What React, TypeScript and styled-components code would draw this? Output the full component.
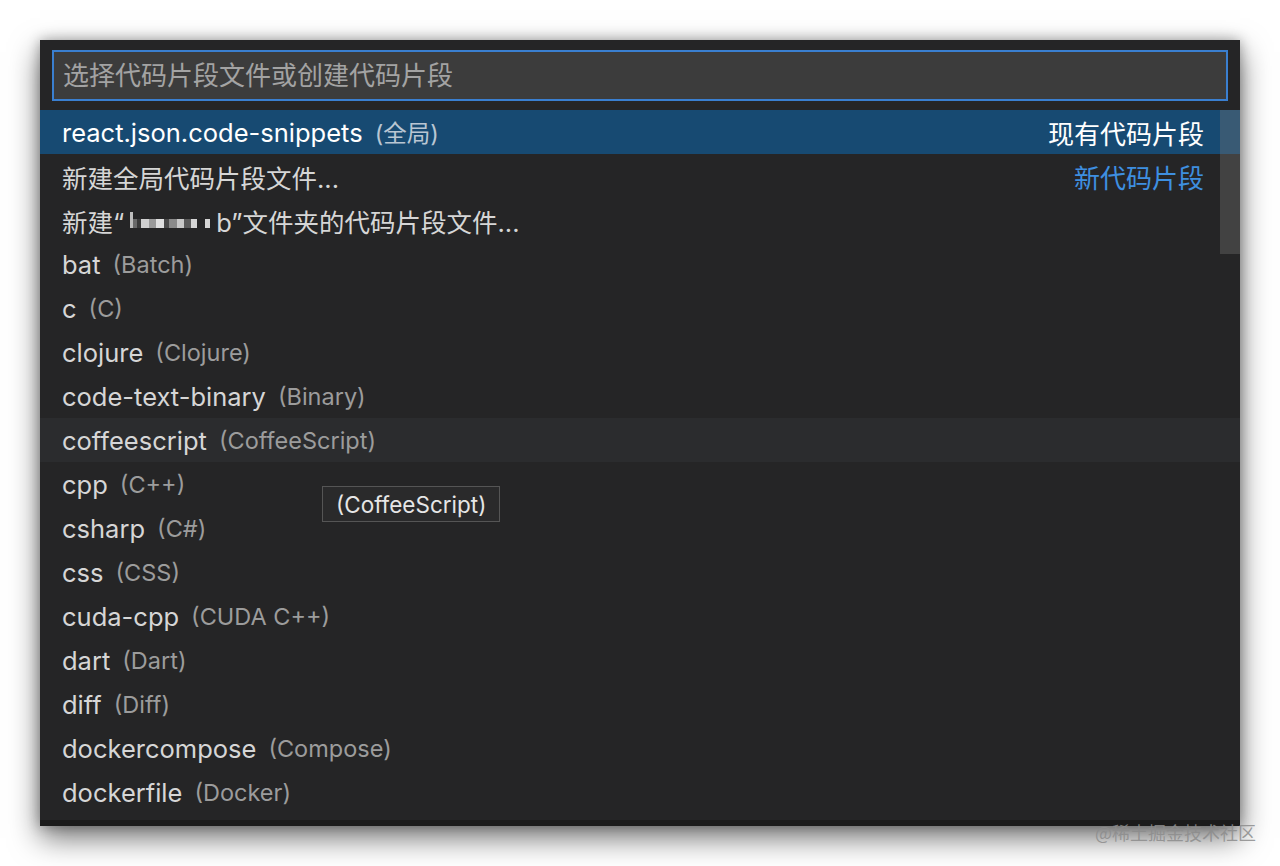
import React from 'react';
import styled, { createGlobalStyle } from 'styled-components';

const GlobalStyle = createGlobalStyle`
  html, body {
    margin: 0;
    padding: 0;
    background: #ffffff;
  }
  body {
    font-family: 'Inter', 'Noto Sans CJK SC', sans-serif;
  }
`;

const Page = styled.div`
  position: relative;
  width: 1280px;
  height: 866px;
  padding: 40px;
  box-sizing: border-box;
  background: #ffffff;
  overflow: hidden;
`;

const Panel = styled.div`
  position: relative;
  width: 1200px;
  height: 786px;
  background: #252526;
  box-shadow: 0 12px 28px rgba(0, 0, 0, 0.55), 0 0 12px rgba(0, 0, 0, 0.3);
  display: flex;
  flex-direction: column;
  overflow: hidden;
  border-bottom: 6px solid #1b1b1b;
  box-sizing: border-box;
`;

const InputWrap = styled.div`
  padding: 10px 12px 9px 12px;
`;

const Input = styled.input`
  width: 100%;
  height: 51px;
  box-sizing: border-box;
  background: #3c3c3c;
  border: 2px solid #3a7fd0;
  outline: none;
  padding: 0 9px;
  color: #cccccc;
  font-family: 'Inter', 'Noto Sans CJK SC', sans-serif;
  font-size: 26px;
  &::placeholder {
    color: #a3a3a3;
  }
`;

const ListArea = styled.div`
  position: relative;
  flex: 1;
  overflow: hidden;
`;

const Row = styled.div<{ selected?: boolean; hovered?: boolean }>`
  display: flex;
  align-items: center;
  height: 44px;
  padding: 0 36px 0 22px;
  background: ${(p) => (p.selected ? '#174a72' : p.hovered ? '#2b2c2e' : 'transparent')};
  color: ${(p) => (p.selected ? '#ffffff' : '#d6d6d6')};
  font-size: 25px;
  white-space: nowrap;
`;

const Label = styled.span<{ cjk?: boolean }>`
  display: inline-flex;
  align-items: center;
  font-size: ${(p) => (p.cjk ? '25.5px' : '25.5px')};
`;

const Desc = styled.span<{ selected?: boolean }>`
  margin-left: 12px;
  font-size: 23.5px;
  color: ${(p) => (p.selected ? '#b9c6d3' : '#9c9c9c')};
`;

const Tag = styled.span<{ accent?: boolean }>`
  margin-left: auto;
  color: ${(p) => (p.accent ? '#3e8fe0' : '#ffffff')};
  font-size: 26px;
`;

const Blur = styled.span`
  display: inline-flex;
  align-items: center;
  margin: 0 6px 0 6px;
`;

const Pixel = styled.span<{ shade: string; w: number; tall?: boolean }>`
  display: inline-block;
  width: ${(p) => p.w}px;
  height: ${(p) => (p.tall ? 16 : 9)}px;
  margin-top: ${(p) => (p.tall ? 0 : 7)}px;
  background: ${(p) => p.shade};
`;

const ScrollThumb = styled.div`
  position: absolute;
  top: 0;
  right: 0;
  width: 20px;
  height: 144px;
  background: rgba(121, 121, 121, 0.35);
`;

const Tooltip = styled.div`
  position: absolute;
  left: 282px;
  top: 376px;
  height: 34px;
  padding: 0 13px;
  display: flex;
  align-items: center;
  background: #2a2a2b;
  border: 1px solid #555555;
  color: #e6e6e6;
  font-size: 22.5px;
`;

const Watermark = styled.div`
  position: absolute;
  left: 1095px;
  top: 819px;
  font-size: 18px;
  color: rgba(140, 140, 140, 0.85);
  font-family: 'Noto Sans CJK SC', sans-serif;
`;

const languages: [string, string][] = [
  ['bat', 'Batch'],
  ['c', 'C'],
  ['clojure', 'Clojure'],
  ['code-text-binary', 'Binary'],
  ['coffeescript', 'CoffeeScript'],
  ['cpp', 'C++'],
  ['csharp', 'C#'],
  ['css', 'CSS'],
  ['cuda-cpp', 'CUDA C++'],
  ['dart', 'Dart'],
  ['diff', 'Diff'],
  ['dockercompose', 'Compose'],
  ['dockerfile', 'Docker'],
];

const blurBits: [string, number, boolean?][] = [
  ['#bdbdbd', 3, true],
  ['#6a6a6a', 4],
  ['#3a3a3a', 4],
  ['#d0d0d0', 8],
  ['#9a9a9a', 7],
  ['#e0e0e0', 8],
  ['#4a4a4a', 5],
  ['#8a8a8a', 8],
  ['#c8c8c8', 7],
  ['#5a5a5a', 7],
  ['#d5d5d5', 6],
  ['#252526', 8],
  ['#d5d5d5', 5],
];

const App: React.FC = () => {
  return (
    <Page>
      <GlobalStyle />
      <Panel>
        <InputWrap>
          <Input placeholder="选择代码片段文件或创建代码片段" />
        </InputWrap>
        <ListArea>
          <Row selected>
            <Label>react.json.code-snippets</Label>
            <Desc selected>(全局)</Desc>
            <Tag>现有代码片段</Tag>
          </Row>
          <Row>
            <Label cjk>新建全局代码片段文件...</Label>
            <Tag accent>新代码片段</Tag>
          </Row>
          <Row>
            <Label cjk>
              新建“
              <Blur>
                {blurBits.map(([shade, w, tall], i) => (
                  <Pixel key={i} shade={shade} w={w} tall={tall} />
                ))}
              </Blur>
              b”文件夹的代码片段文件...
            </Label>
          </Row>
          {languages.map(([id, name]) => (
            <Row key={id} hovered={id === 'coffeescript'}>
              <Label>{id}</Label>
              <Desc>({name})</Desc>
            </Row>
          ))}
          <ScrollThumb />
          <Tooltip>(CoffeeScript)</Tooltip>
        </ListArea>
      </Panel>
      <Watermark>@稀土掘金技术社区</Watermark>
    </Page>
  );
};

export default App;
